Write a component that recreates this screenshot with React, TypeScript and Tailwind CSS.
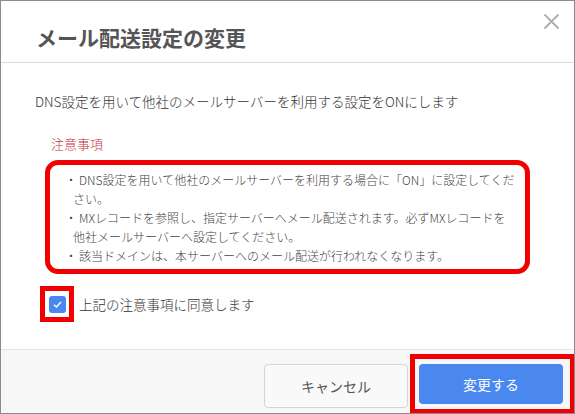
const notes: string[][] = [
  ["DNS設定を用いて他社のメールサーバーを利用する場合に「ON」に設定してくだ", "さい。"],
  ["MXレコードを参照し、指定サーバーへメール配送されます。必ずMXレコードを", "他社メールサーバーへ設定してください。"],
  ["該当ドメインは、本サーバーへのメール配送が行われなくなります。"],
];

export default function App() {
  return (
    <div
      className="relative flex h-[414px] w-[575px] flex-col overflow-hidden border border-[#8c8c8c] bg-white text-[#333]"
      style={{ fontFamily: '"Noto Sans CJK JP", "Noto Sans", sans-serif' }}
    >
      {/* header */}
      <div className="h-[62px] shrink-0 border-b border-[#dcdcdc] pl-[35px] pt-[24px]">
        <h1 className="text-[21px] font-bold leading-[24px] text-[#555]">メール配送設定の変更</h1>
      </div>
      <button className="absolute right-[14px] top-[12px] text-[#b0b0b0]" aria-label="close">
        <svg width="17" height="17" viewBox="0 0 17 17" fill="none" stroke="currentColor" strokeWidth="2">
          <path d="M1.5 1.5 15.5 15.5M15.5 1.5 1.5 15.5" />
        </svg>
      </button>

      {/* body */}
      <div className="flex-1 pl-[34px] pt-[28px] font-light">
        <p className="text-[13.5px] leading-[20px]">DNS設定を用いて他社のメールサーバーを利用する設定をONにします</p>
        <p className="ml-[16px] mt-[24px] text-[13px] leading-[18px] text-[#c6333a]">注意事項</p>
        <div className="ml-[10px] mt-[7px] h-[114px] w-[485px] rounded-[13px] border-[5px] border-[#f00000] pl-[23px] pt-[5px]">
          <ul className="text-[12px] leading-[19px] text-[#444]">
            {notes.map((lines) => (
              <li key={lines[0]} className="-indent-[8px] whitespace-nowrap">
                <span className="inline-block w-[14px] indent-0">・</span>
                {lines[0]}
                {lines[1] && (
                  <>
                    <br />
                    {lines[1]}
                  </>
                )}
              </li>
            ))}
          </ul>
        </div>
        <div className="ml-[5px] mt-[12px] flex items-center gap-[5px]">
          <div className="grid h-[36px] w-[34px] place-items-center border-[5px] border-[#f00000]">
            <span className="grid h-[17px] w-[17px] place-items-center rounded-[3px] bg-[#4a87ee]">
              <svg width="11" height="11" viewBox="0 0 11 11" fill="none" stroke="white" strokeWidth="1.4">
                <path d="M2 5.8 4.4 8 9 3" />
              </svg>
            </span>
          </div>
          <span className="text-[13.5px] leading-[20px]">上記の注意事項に同意します</span>
        </div>
      </div>

      {/* footer */}
      <div className="flex h-[64px] shrink-0 items-start justify-end border-t border-[#e4e4e4] bg-[#f7f7f7] pt-[4px]">
        <button className="mr-[2px] mt-[10px] h-[44px] w-[144px] rounded-[4px] border border-[#d4d4d4] bg-[#f9f9f9] text-[14px] text-[#555]">
          キャンセル
        </button>
        <div className="-mr-[1px] h-[60px] w-[165px] border-[5px] border-[#f00000] pl-[4px] pt-[5px]">
          <button className="h-[40px] w-[144px] rounded-[4px] bg-[#4a87ee] text-[14px] text-white">変更する</button>
        </div>
      </div>
    </div>
  );
}
